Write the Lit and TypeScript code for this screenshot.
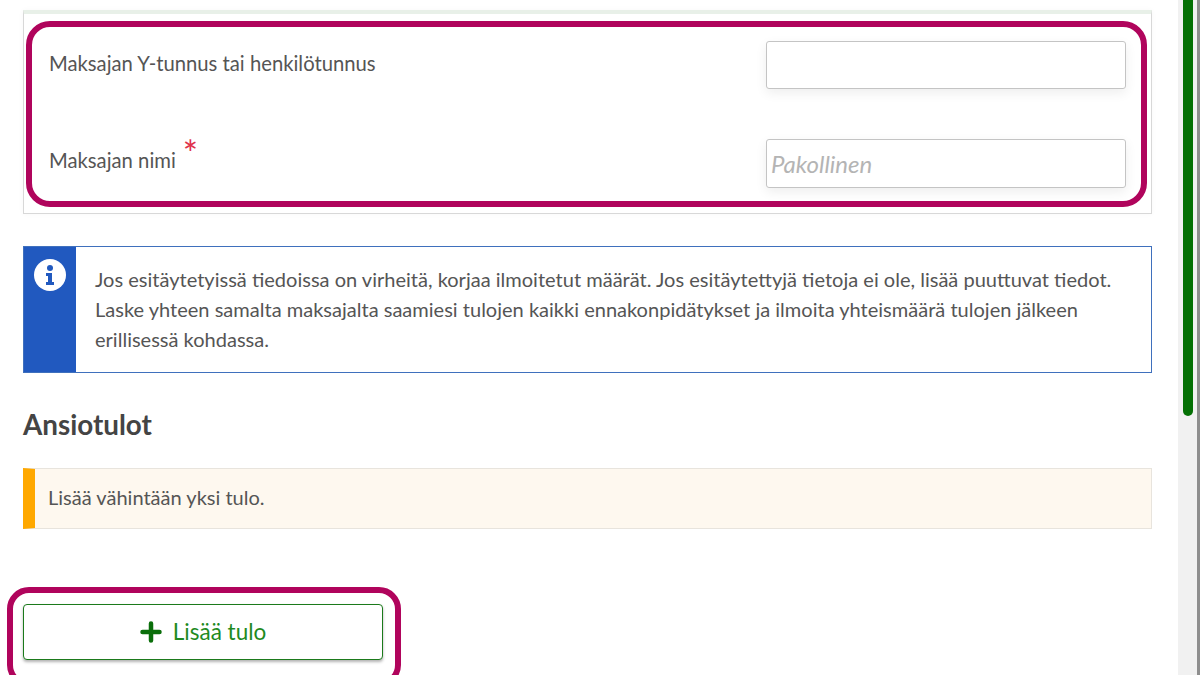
import { LitElement, html, css } from "lit";
import { customElement } from "lit/decorators.js";

@customElement("app-root")
export class AppRoot extends LitElement {
  static styles = css`
    :host { display: block; width: 1200px; height: 675px; overflow: hidden; background: #fff; font-family: Lato, sans-serif; color: #555; font-size: 20.05px; }
    .page { display: flex; height: 675px; overflow: hidden; }
    .main { width: 1129px; margin-left: 23px; padding-top: 10px; flex: none; }
    .card { box-sizing: border-box; height: 204px; border: 1px solid #d8d8d8; border-top: 4px solid #e8f0e8; padding: 7px 4px 0 2px; box-shadow: 0 0 6px rgba(0,0,0,.03); }
    .ring { box-sizing: border-box; height: 186px; border: 6px solid #b0045c; border-radius: 24px; padding: 14px 15px 0 17px; }
    .row { display: flex; justify-content: space-between; }
    .row + .row { margin-top: 50px; }
    .r1 { height: 48px; }
    .r2 { height: 49px; }
    .lab { line-height: 24px; padding-top: 10px; font-size: 20.25px; }
    .r2 .lab { padding-top: 9px; }
    .lab2 { display: flex; align-items: flex-start; gap: 7px; }
    .star { color: #e0324b; font-size: 36px; line-height: 36px; height: 20px; margin-top: -13px; }
    .inp { box-sizing: border-box; width: 360px; height: 100%; border: 1px solid #c4c4c4; border-radius: 3px; background: #fff; box-shadow: 0 4px 12px rgba(0,0,0,.07); }
    .ph { font-style: italic; font-size: 24px; color: #b4b4b4; padding: 9px 0 0 4px; line-height: 30px; }
    .info { box-sizing: border-box; display: flex; height: 127px; margin-top: 32px; border: 1px solid #3f70bd; }
    .side { width: 52px; background: #2159bf; flex: none; display: flex; justify-content: center; padding-top: 12px; box-sizing: border-box; }
    .info p { margin: 0; padding: 17px 0 0 19px; line-height: 30px; }
    h2 { margin: 35px 0 0; font-size: 27.8px; font-weight: 700; line-height: 34px; color: #444; }
    .warn { box-sizing: border-box; display: flex; height: 61px; margin-top: 26px; padding: 0 0 4px 13px; background: #fef8ef; border: 1px solid #e8e4dd; border-left: 12px solid #ffa800; align-items: center; }
    .btnring { box-sizing: border-box; width: 394px; height: 100px; margin: 58px 0 0 -16px; border: 6px solid #b0045c; border-radius: 22px; padding: 11px 0 0 10px; }
    .btn { box-sizing: border-box; width: 360px; height: 56px; padding-bottom: 2px; border: 1px solid #1b7a1b; border-radius: 4px; background: #fff; box-shadow: 0 2px 3px rgba(0,0,0,.3); display: flex; justify-content: center; align-items: center; gap: 11px; color: #1f8a1f; font-size: 22.5px; }
    .btn svg { margin-top: 2px; }
    .track { width: 19px; margin-left: 26px; height: 675px; background: #f1f1f1; flex: none; display: flex; justify-content: center; }
    .thumb { width: 10px; height: 416px; background: #047004; border-radius: 0 0 5px 5px; }
    .edge { flex: 1; background: #8e8e8e; }
  `;

  render() {
    return html`<div class="page">
      <div class="main">
        <div class="card">
          <div class="ring">
            <div class="row r1"><div class="lab">Maksajan Y-tunnus tai henkilötunnus</div><div class="inp"></div></div>
            <div class="row r2"><div class="lab lab2"><span>Maksajan nimi</span><span class="star">*</span></div><div class="inp ph">Pakollinen</div></div>
          </div>
        </div>
        <div class="info">
          <div class="side">
            <svg width="32" height="32" viewBox="0 0 32 32"><circle cx="16" cy="16" r="16" fill="#fff"/><circle cx="16" cy="9" r="3" fill="#2159bf"/><path d="M12 14h6v9h2v3h-8v-3h2v-6h-2z" fill="#2159bf"/></svg>
          </div>
          <p>Jos esitäytetyissä tiedoissa on virheitä, korjaa ilmoitetut määrät. Jos esitäytettyjä tietoja ei ole, lisää puuttuvat tiedot.<br>Laske yhteen samalta maksajalta saamiesi tulojen kaikki ennakonpidätykset ja ilmoita yhteismäärä tulojen jälkeen<br>erillisessä kohdassa.</p>
        </div>
        <h2>Ansiotulot</h2>
        <div class="warn">Lisää vähintään yksi tulo.</div>
        <div class="btnring">
          <div class="btn">
            <svg width="22" height="22" viewBox="0 0 22 22"><path d="M11 2.5v17M2.5 11h17" stroke="#0a6e0a" stroke-width="4.5" stroke-linecap="round"/></svg>
            <span>Lisää tulo</span>
          </div>
        </div>
      </div>
      <div class="track"><div class="thumb"></div></div>
      <div class="edge"></div>
    </div>`;
  }
}
